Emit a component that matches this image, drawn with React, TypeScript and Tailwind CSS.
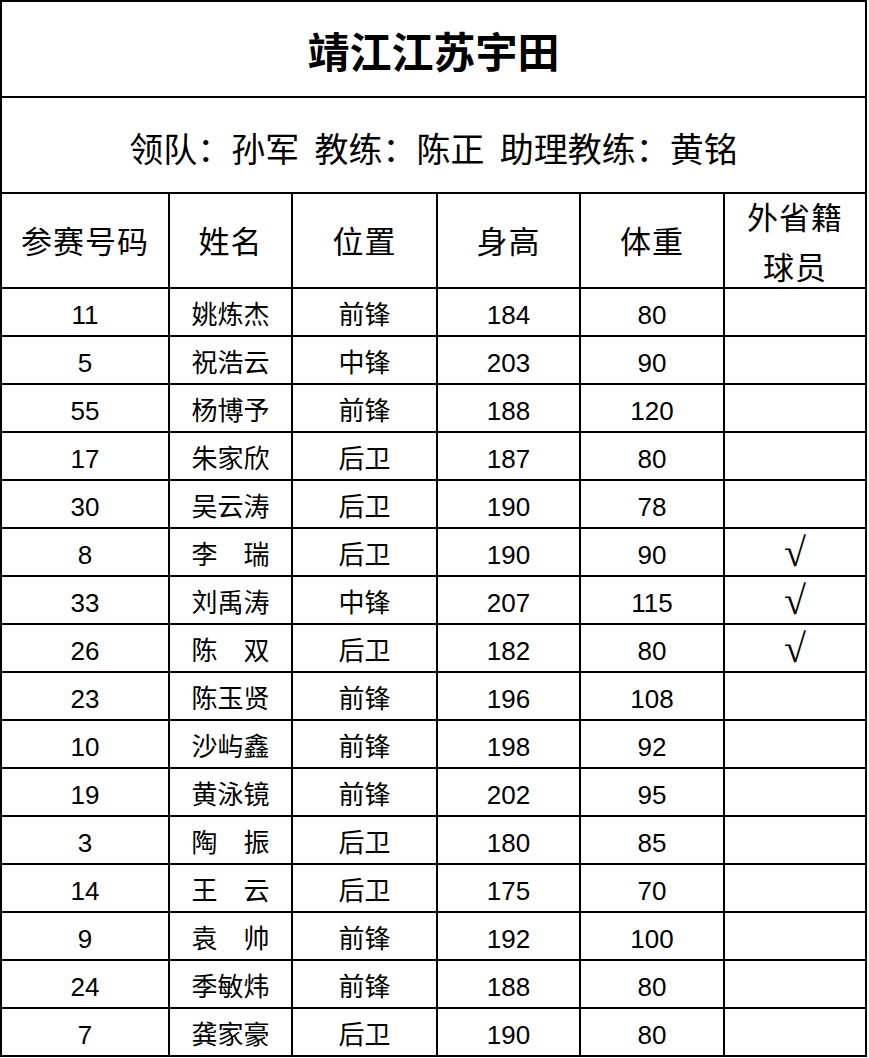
const players: [string, string, string, string, string, boolean][] = [
  ['11', '姚炼杰', '前锋', '184', '80', false],
  ['5', '祝浩云', '中锋', '203', '90', false],
  ['55', '杨博予', '前锋', '188', '120', false],
  ['17', '朱家欣', '后卫', '187', '80', false],
  ['30', '吴云涛', '后卫', '190', '78', false],
  ['8', '李　瑞', '后卫', '190', '90', true],
  ['33', '刘禹涛', '中锋', '207', '115', true],
  ['26', '陈　双', '后卫', '182', '80', true],
  ['23', '陈玉贤', '前锋', '196', '108', false],
  ['10', '沙屿鑫', '前锋', '198', '92', false],
  ['19', '黄泳镜', '前锋', '202', '95', false],
  ['3', '陶　振', '后卫', '180', '85', false],
  ['14', '王　云', '后卫', '175', '70', false],
  ['9', '袁　帅', '前锋', '192', '100', false],
  ['24', '季敏炜', '前锋', '188', '80', false],
  ['7', '龚家豪', '后卫', '190', '80', false],
];

const cell = 'bg-white flex items-center justify-center text-black';
const num = `${cell} pt-[6px] font-['Liberation_Sans','Noto_Sans_CJK_SC',sans-serif] text-[26px] text-[#222]`;
const cjk = `${cell} font-['Noto_Sans_CJK_SC',sans-serif] text-[26px]`;
const head = `${cell} font-['Noto_Sans_CJK_SC',sans-serif] text-[31px] tracking-[1px]`;

export default function App() {
  return (
    <div className="min-h-screen bg-white">
      <div className="grid w-[867px] grid-cols-[166px_121px_143px_141px_142px_140px] grid-rows-[94px_94px_93px_repeat(16,46px)] gap-[2px] bg-black p-[2px]">
        <div className={`${cell} col-span-6 font-['Noto_Sans_CJK_SC',sans-serif] text-[42px] font-bold`}>
          靖江江苏宇田
        </div>
        <div className={`${cell} col-span-6 pt-[4px] font-['Noto_Sans_CJK_SC',sans-serif] text-[34px] whitespace-pre`}>
          {'领队：孙军  教练：陈正  助理教练：黄铭'}
        </div>

        <div className={head}>参赛号码</div>
        <div className={head}>姓名</div>
        <div className={head}>位置</div>
        <div className={head}>身高</div>
        <div className={head}>体重</div>
        <div className={`${head} flex-col leading-[50px]`}>
          <span>外省籍</span>
          <span>球员</span>
        </div>

        {players.map(([no, name, pos, height, weight, outside]) => (
          <>
            <div key={`${no}-a`} className={num}>{no}</div>
            <div key={`${no}-b`} className={cjk}>{name}</div>
            <div key={`${no}-c`} className={cjk}>{pos}</div>
            <div key={`${no}-d`} className={num}>{height}</div>
            <div key={`${no}-e`} className={num}>{weight}</div>
            <div key={`${no}-f`} className={`${cell} pt-[2px] font-['Liberation_Serif',serif] text-[40px]`}>
              {outside ? '√' : ''}
            </div>
          </>
        ))}
      </div>
    </div>
  );
}
